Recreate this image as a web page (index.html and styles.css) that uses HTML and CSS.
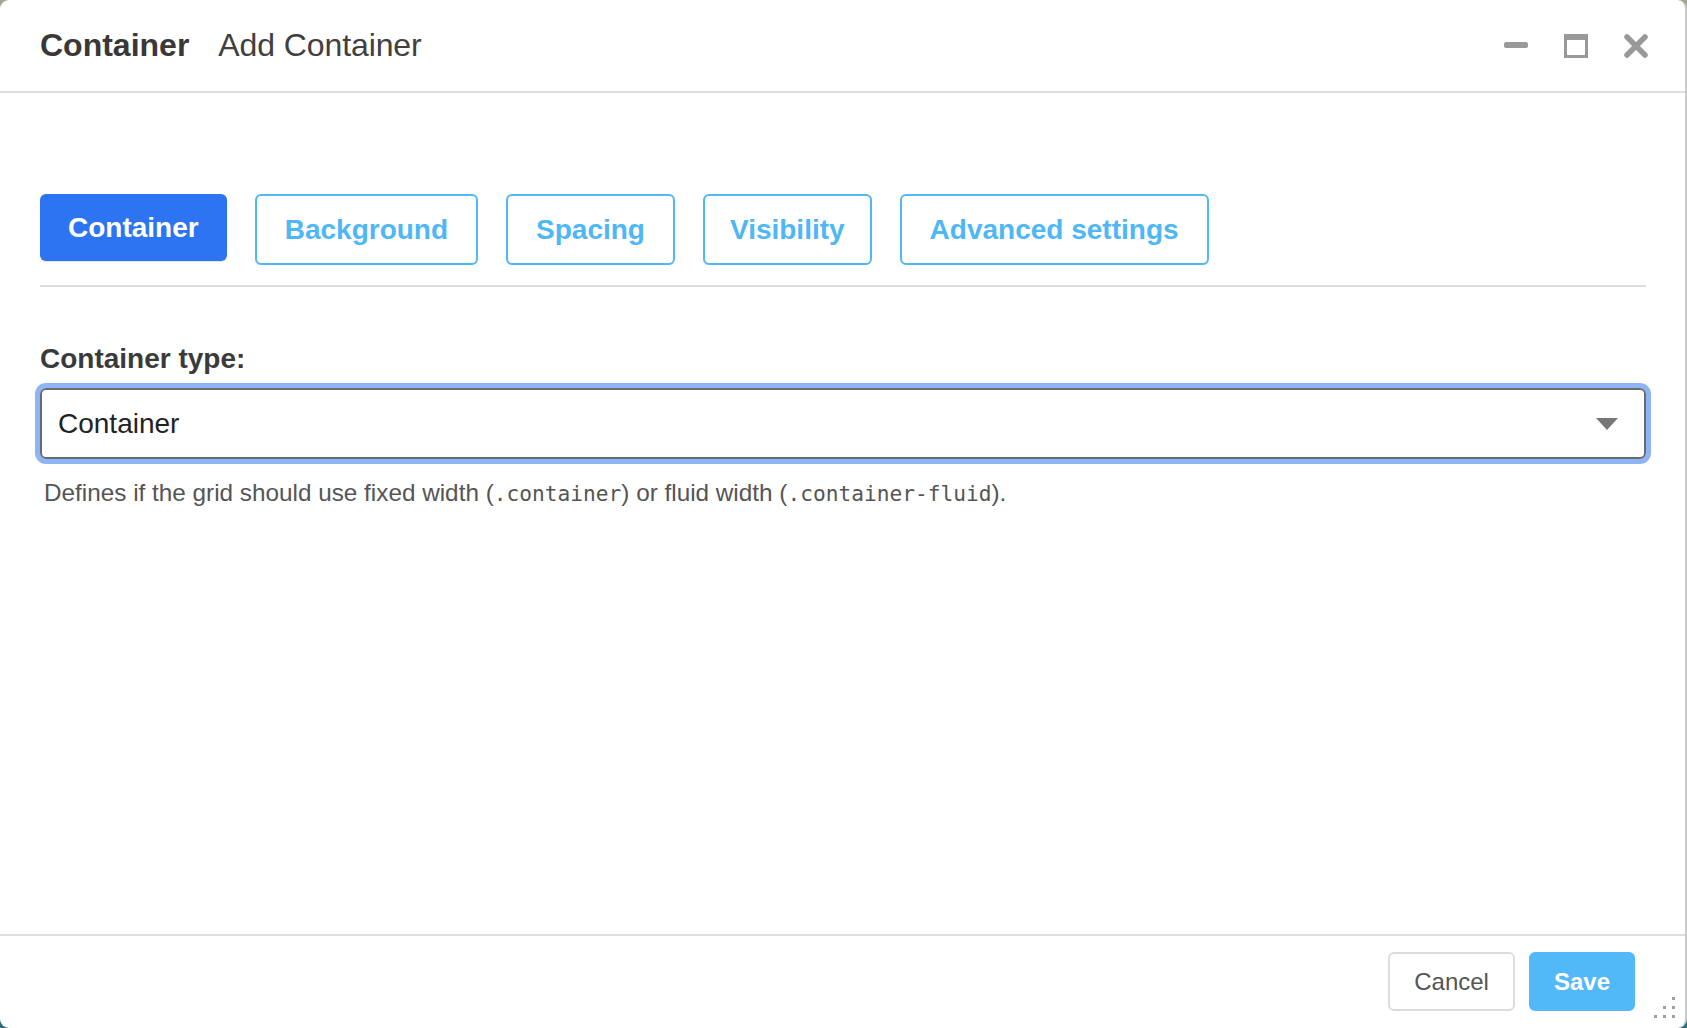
FILE: index.html
```html
<!DOCTYPE html>
<html lang="en">
<head>
<meta charset="utf-8">
<title>Add Container</title>
<link rel="stylesheet" href="styles.css">
</head>
<body>
<div class="dialog">
  <header class="header">
    <span class="title">Container</span>
    <span class="subtitle">Add Container</span>
    <div class="controls">
      <svg class="ctl" width="24" height="24" viewBox="0 0 24 24"><rect x="0" y="8" width="24" height="6" rx="2" fill="#999"/></svg>
      <svg class="ctl" width="24" height="24" viewBox="0 0 24 24"><path d="M1.5 1.5h21v21h-21z" fill="none" stroke="#999" stroke-width="3"/><rect x="0" y="0" width="24" height="6" fill="#999"/></svg>
      <svg class="ctl" width="24" height="24" viewBox="0 0 24 24"><path d="M3 3L21 21M21 3L3 21" stroke="#999" stroke-width="5.5" stroke-linecap="round"/></svg>
    </div>
  </header>
  <main class="content">
    <nav class="tabs">
      <button class="tab tab-active">Container</button>
      <button class="tab">Background</button>
      <button class="tab">Spacing</button>
      <button class="tab tab-narrow">Visibility</button>
      <button class="tab">Advanced settings</button>
    </nav>
    <label class="label">Container type:</label>
    <div class="select">
      <span class="select-value">Container</span>
      <svg class="caret" width="22" height="12" viewBox="0 0 22 12"><path d="M0 0H22L11 12Z" fill="#777"/></svg>
    </div>
    <p class="help">Defines if the grid should use fixed width (<code>.container</code>) or fluid width (<code>.container-fluid</code>).</p>
  </main>
  <footer class="footer">
    <button class="btn btn-cancel">Cancel</button>
    <button class="btn btn-save">Save</button>
    <div class="grip">
      <span></span><span></span><span></span><span></span><span></span><span></span>
    </div>
  </footer>
</div>
</body>
</html>
```
FILE: styles.css
```css
* { box-sizing: border-box; }
html, body { margin: 0; padding: 0; }
body {
  background: linear-gradient(180deg, #a4a690 0%, #6f8a86 60%, #2d6f79 100%);
  font-family: "Liberation Sans", Arial, sans-serif;
  width: 1687px;
  height: 1028px;
  overflow: hidden;
}
.dialog {
  width: 1687px;
  height: 1028px;
  background: #fff;
  border-radius: 9px;
  border-right: 2px solid #cacaca;
  display: flex;
  flex-direction: column;
  position: relative;
}
.header {
  height: 93px;
  flex: none;
  border-bottom: 2px solid #dedede;
  display: flex;
  align-items: center;
  padding: 0 37px 0 40px;
}
.title {
  font-size: 32px;
  font-weight: bold;
  color: #383838;
}
.subtitle {
  font-size: 32px;
  color: #404040;
  margin-left: 29px;
  letter-spacing: -0.1px;
}
.controls {
  margin-left: auto;
  display: flex;
  gap: 36px;
  align-items: center;
  padding-top: 1px;
}
.ctl { display: block; }
.content {
  flex: 1;
  padding: 0 39px 0 40px;
  display: flex;
  flex-direction: column;
  align-items: stretch;
}
.tabs {
  margin-top: 101px;
  display: flex;
  align-items: flex-start;
  gap: 28px;
  padding-bottom: 20px;
  border-bottom: 2px solid #dcdcdc;
}
.tab {
  font-family: "Liberation Sans", Arial, sans-serif;
  font-size: 28px;
  font-weight: bold;
  height: 71px;
  padding: 0 28px;
  border: 2px solid #51b7f6;
  border-radius: 6px;
  background: #fff;
  color: #4fb7f6;
  cursor: pointer;
}
.tab-narrow {
  padding: 0 25px;
}
.tab-active {
  height: 67px;
  border: none;
  background: #2c74f1;
  color: #fff;
  box-shadow: 0 1px 1px rgba(0,0,0,0.12);
}
.label {
  margin-top: 56px;
  font-size: 28px;
  font-weight: bold;
  color: #3a3a3a;
}
.select {
  margin-top: 13px;
  height: 71px;
  border: 2px solid #6a6a6a;
  border-radius: 6px;
  box-shadow: 0 0 0 5px #8db4f4;
  display: flex;
  align-items: center;
  padding: 0 26px 0 16px;
}
.select-value {
  font-size: 28px;
  color: #222;
}
.caret { margin-left: auto; display: block; }
.help {
  margin: 20px 0 0 4px;
  font-size: 24.3px;
  color: #555;
}
.help code {
  font-family: "DejaVu Sans Mono", "Liberation Mono", monospace;
  font-size: 21.2px;
  color: #555;
}
.footer {
  flex: none;
  height: 94px;
  border-top: 2px solid #dedede;
  display: flex;
  justify-content: flex-end;
  align-items: flex-start;
  gap: 14px;
  padding: 16px 50px 0 0;
  position: relative;
}
.btn {
  font-family: "Liberation Sans", Arial, sans-serif;
  font-size: 24px;
  height: 59px;
  padding: 0 24px;
  border-radius: 6px;
  cursor: pointer;
}
.btn-cancel {
  background: #fff;
  border: 2px solid #dcdcdc;
  color: #555;
}
.btn-save {
  background: #52b9f8;
  border: 2px solid #52b9f8;
  color: #fff;
  font-weight: bold;
  padding: 0 23px;
}
.grip {
  position: absolute;
  right: 10px;
  bottom: 10px;
  width: 21px;
  height: 21px;
}
.grip span {
  position: absolute;
  width: 3px;
  height: 3px;
  background: #a0a0a0;
}
.grip span:nth-child(1) { right: 0; top: 0; }
.grip span:nth-child(2) { right: 0; top: 9px; }
.grip span:nth-child(3) { right: 9px; top: 9px; }
.grip span:nth-child(4) { right: 0; top: 18px; }
.grip span:nth-child(5) { right: 9px; top: 18px; }
.grip span:nth-child(6) { right: 18px; top: 18px; }
```
